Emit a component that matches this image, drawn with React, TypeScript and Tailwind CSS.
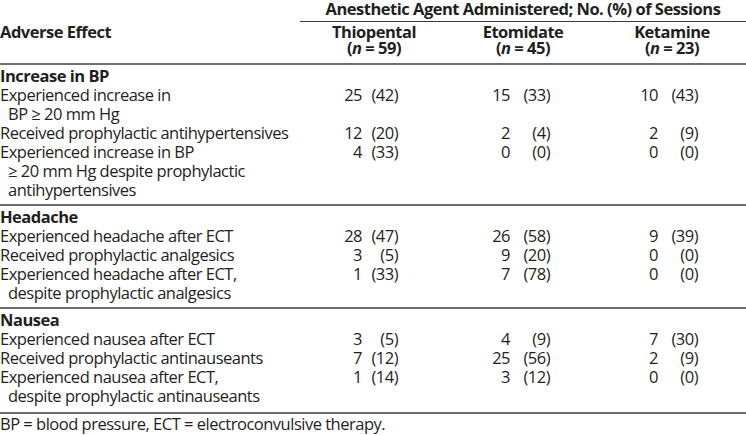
const rows = [
  {
    title: "Increase in BP",
    items: [
      { label: ["Experienced increase in", "BP ≥ 20 mm Hg"], v: [["25", "(42)"], ["15", "(33)"], ["10", "(43)"]] },
      { label: ["Received prophylactic antihypertensives"], v: [["12", "(20)"], ["2", "(4)"], ["2", "(9)"]] },
      {
        label: ["Experienced increase in BP", "≥ 20 mm Hg despite prophylactic", "antihypertensives"],
        v: [["4", "(33)"], ["0", "(0)"], ["0", "(0)"]],
      },
    ],
  },
  {
    title: "Headache",
    items: [
      { label: ["Experienced headache after ECT"], v: [["28", "(47)"], ["26", "(58)"], ["9", "(39)"]] },
      { label: ["Received prophylactic analgesics"], v: [["3", "(5)"], ["9", "(20)"], ["0", "(0)"]] },
      {
        label: ["Experienced headache after ECT,", "despite prophylactic analgesics"],
        v: [["1", "(33)"], ["7", "(78)"], ["0", "(0)"]],
      },
    ],
  },
  {
    title: "Nausea",
    items: [
      { label: ["Experienced nausea after ECT"], v: [["3", "(5)"], ["4", "(9)"], ["7", "(30)"]] },
      { label: ["Received prophylactic antinauseants"], v: [["7", "(12)"], ["25", "(56)"], ["2", "(9)"]] },
      {
        label: ["Experienced nausea after ECT,", "despite prophylactic antinauseants"],
        v: [["1", "(14)"], ["3", "(12)"], ["0", "(0)"]],
      },
    ],
  },
];

// sub-column widths per agent column: [number box, percent box]
const cols = [
  { num: "w-[62px]", pct: "w-[36px]" },
  { num: "w-[62px]", pct: "w-[40px]" },
  { num: "w-[60px]", pct: "w-[40px]" },
];

function Cell({ v, i }: { v: string[]; i: number }) {
  return (
    <div className="flex">
      <div className={`${cols[i].num} text-right`}>{v[0]}</div>
      <div className={`${cols[i].pct} text-right`}>{v[1]}</div>
    </div>
  );
}

export default function App() {
  return (
    <div className="h-[435px] w-[746px] overflow-hidden whitespace-nowrap bg-white font-['Open_Sans',sans-serif] text-[16.5px] tracking-[-0.5px] text-[#231f20]">
      <div className="flex">
        <div className="w-[300px] pt-[24px] font-bold leading-[16px]">Adverse Effect</div>
        <div className="flex-1">
          <div className="border-b border-[#3a3a3a] pb-[3px] text-center font-bold leading-[18px]">
            Anesthetic Agent Administered; No. (%) of Sessions
          </div>
          <div className="grid grid-cols-[148px_150px_148px] pt-[2px] text-center font-bold leading-[16px]">
            <div>
              Thiopental
              <br />(<i>n</i> = 59)
            </div>
            <div>
              Etomidate
              <br />(<i>n</i> = 45)
            </div>
            <div>
              Ketamine
              <br />(<i>n</i> = 23)
            </div>
          </div>
        </div>
      </div>
      <div className="mt-[7px] h-[2px] bg-[#6e6e6e]" />
      {rows.map((s, si) => (
        <div key={si}>
          {si > 0 && <div className="mt-[5px] h-[2px] bg-[#6e6e6e]" />}
          <div className="pt-[1px] font-bold leading-[19px]">{s.title}</div>
          {s.items.map((r, ri) => (
            <div key={ri} className="grid grid-cols-[300px_148px_150px_148px] leading-[19px]">
              <div>
                {r.label.map((l, li) => (
                  <div key={li} className={li > 0 ? "pl-[8px]" : ""}>
                    {l}
                  </div>
                ))}
              </div>
              {r.v.map((v, vi) => (
                <Cell key={vi} v={v} i={vi} />
              ))}
            </div>
          ))}
        </div>
      ))}
      <div className="mt-[7px] h-[2px] bg-[#6e6e6e]" />
      <div className="leading-[19px]">BP = blood pressure, ECT = electroconvulsive therapy.</div>
    </div>
  );
}
